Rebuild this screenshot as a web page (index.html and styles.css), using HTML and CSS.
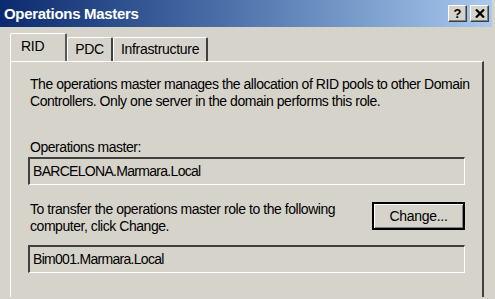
FILE: index.html
```html
<!DOCTYPE html>
<html lang="en">
<head>
    <meta charset="UTF-8">
    <title>Operations Masters</title>
    <link rel="stylesheet" href="styles.css">
</head>
<body>
    <div class="window">
        <div class="titlebar">
            <span class="title">Operations Masters</span>
            <div class="caption-buttons">
                <button class="cap-btn help">?</button>
                <button class="cap-btn close">
                    <svg width="10" height="9" viewBox="0 0 10 9">
                        <path d="M1 0.5 L9 8.5 M9 0.5 L1 8.5" stroke="#000" stroke-width="2.2"/>
                    </svg>
                </button>
            </div>
        </div>

        <div class="tabs">
            <div class="tab active">RID</div>
            <div class="tab">PDC</div>
            <div class="tab">Infrastructure</div>
        </div>

        <div class="panel">
            <p class="desc">The operations master manages the allocation of RID pools to other Domain Controllers. Only one server in the domain performs this role.</p>

            <div class="label">Operations master:</div>
            <div class="field">BARCELONA.Marmara.Local</div>

            <div class="transfer">
                <p class="transfer-text">To transfer the operations master role to the following computer, click Change.</p>
                <button class="btn">Change...</button>
            </div>

            <div class="field">Bim001.Marmara.Local</div>
        </div>
    </div>
</body>
</html>
```

FILE: styles.css
```css
body {
    margin: 0;
    padding: 0;
    background-color: #d6d3cb;
    font-family: "Liberation Sans", Arial, sans-serif;
    font-size: 14px;
    letter-spacing: -0.45px;
    color: #000;
}

.window {
    width: 495px;
    height: 299px;
    background-color: #d6d3cb;
    overflow: hidden;
}

.titlebar {
    height: 27px;
    margin-right: 3px;
    background: linear-gradient(to right, #0c2a6e 0%, #4a6fa8 45%, #a9c9ee 100%);
    display: flex;
    align-items: center;
    justify-content: space-between;
}

.title {
    color: #fff;
    font-weight: bold;
    font-size: 15px;
    padding-left: 4px;
    letter-spacing: -0.3px;
}

.caption-buttons {
    display: flex;
    gap: 3px;
    padding-right: 3px;
}

.cap-btn {
    width: 19px;
    height: 17px;
    padding: 0;
    background-color: #d6d3cb;
    border: 1px solid;
    border-color: #fff #404040 #404040 #fff;
    box-shadow: inset -1px -1px 0 #808080;
    font-family: "Liberation Sans", Arial, sans-serif;
    font-weight: bold;
    font-size: 13px;
    line-height: 14px;
    display: flex;
    align-items: center;
    justify-content: center;
}

.tabs {
    display: flex;
    align-items: flex-end;
    height: 28px;
    margin-top: 6px;
    padding-left: 10px;
    letter-spacing: -0.3px;
}

.tab {
    height: 24px;
    padding: 0 7px;
    line-height: 23px;
    border-left: 1px solid #fff;
    border-top: 1px solid #fff;
    border-right: 2px solid #404040;
    border-radius: 2px 2px 0 0;
    box-sizing: border-box;
}

.tab.active {
    height: 28px;
    padding: 0 21px 0 10px;
    line-height: 25px;
    border-right-color: #5a5a5a;
}

.panel {
    height: 236px;
    width: 474px;
    margin-left: 10px;
    box-sizing: border-box;
    border-top: 1px solid #fff;
    border-left: 1px solid #fff;
    border-right: 2px solid #404040;
    padding: 14px 17px 0 17px;
}

.desc {
    margin: 0 -8px 0 0;
    line-height: 17px;
    padding-left: 2px;
}

.label {
    margin-top: 29px;
    line-height: 17px;
    padding-left: 2px;
}

.field {
    height: 28px;
    box-sizing: border-box;
    border-top: 2px solid #404040;
    border-left: 2px solid #404040;
    border-right: 1px solid #fff;
    border-bottom: 1px solid #fff;
    padding-left: 3px;
    line-height: 25px;
    font-size: 14px;
    letter-spacing: -0.7px;
    margin-top: 1px;
}

.transfer {
    display: flex;
    justify-content: space-between;
    align-items: flex-start;
    margin-top: 16px;
}

.transfer-text {
    margin: 0;
    width: 330px;
    line-height: 17px;
    padding-left: 2px;
}

.btn {
    width: 93px;
    height: 28px;
    margin-top: 1px;
    background-color: #d6d3cb;
    border: 2px solid #000;
    box-shadow: inset 1px 1px 0 #fff, inset -1px -1px 0 #808080;
    font-family: "Liberation Sans", Arial, sans-serif;
    font-size: 14px;
    letter-spacing: -0.3px;
    padding: 0;
}

.transfer + .field {
    margin-top: 10px;
}
```
